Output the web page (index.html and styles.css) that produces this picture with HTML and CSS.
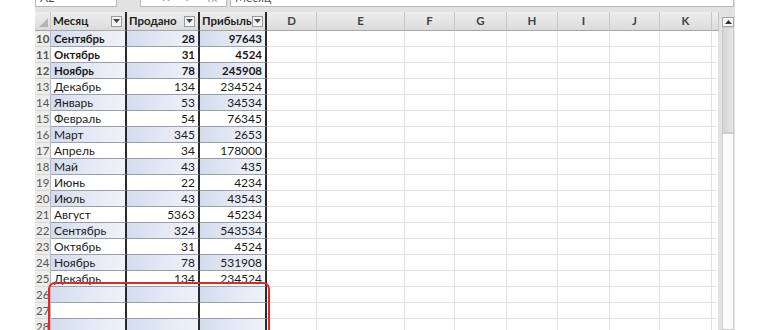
FILE: index.html
```html
<!DOCTYPE html>
<html lang="ru">
<head>
<meta charset="utf-8">
<link rel="stylesheet" href="styles.css">
</head>
<body>
<div class="screen">
  <div class="toolbar">
    <div class="box namebox"><span>A2</span></div>
    <div class="sep"></div>
    <div class="box fxbox"><span>✕ ✓ fx</span></div>
    <div class="box formula"><span>Месяц</span></div>
  </div>
  <div class="sheet">
    <div class="grid">
      <div class="row head">
        <div class="rn corner"><svg width="9" height="9" viewBox="0 0 9 9"><path d="M9 0 L9 9 L0 9 Z" fill="#b5b5b5"/></svg></div>
        <div class="c th">Месяц<span class="dd"><svg width="7" height="4" viewBox="0 0 7 4"><path d="M0 0H7L3.5 4Z" fill="#444"/></svg></span></div>
        <div class="c th">Продано<span class="dd"><svg width="7" height="4" viewBox="0 0 7 4"><path d="M0 0H7L3.5 4Z" fill="#444"/></svg></span></div>
        <div class="c th">Прибыль<span class="dd"><svg width="7" height="4" viewBox="0 0 7 4"><path d="M0 0H7L3.5 4Z" fill="#444"/></svg></span></div>
        <div class="c col">D</div><div class="c col">E</div><div class="c col">F</div><div class="c col">G</div><div class="c col">H</div><div class="c col">I</div><div class="c col">J</div><div class="c col">K</div><div class="c col"></div>
      </div>
      <div class="row band bold"><div class="rn">10</div><div class="c ta">Сентябрь</div><div class="c tb">28</div><div class="c tl">97643</div><div class="c"></div><div class="c"></div><div class="c"></div><div class="c"></div><div class="c"></div><div class="c"></div><div class="c"></div><div class="c"></div><div class="c"></div></div>
      <div class="row bold"><div class="rn">11</div><div class="c ta">Октябрь</div><div class="c tb">31</div><div class="c tl">4524</div><div class="c"></div><div class="c"></div><div class="c"></div><div class="c"></div><div class="c"></div><div class="c"></div><div class="c"></div><div class="c"></div><div class="c"></div></div>
      <div class="row band bold"><div class="rn">12</div><div class="c ta">Ноябрь</div><div class="c tb">78</div><div class="c tl">245908</div><div class="c"></div><div class="c"></div><div class="c"></div><div class="c"></div><div class="c"></div><div class="c"></div><div class="c"></div><div class="c"></div><div class="c"></div></div>
      <div class="row"><div class="rn">13</div><div class="c ta">Декабрь</div><div class="c tb">134</div><div class="c tl">234524</div><div class="c"></div><div class="c"></div><div class="c"></div><div class="c"></div><div class="c"></div><div class="c"></div><div class="c"></div><div class="c"></div><div class="c"></div></div>
      <div class="row band"><div class="rn">14</div><div class="c ta">Январь</div><div class="c tb">53</div><div class="c tl">34534</div><div class="c"></div><div class="c"></div><div class="c"></div><div class="c"></div><div class="c"></div><div class="c"></div><div class="c"></div><div class="c"></div><div class="c"></div></div>
      <div class="row"><div class="rn">15</div><div class="c ta">Февраль</div><div class="c tb">54</div><div class="c tl">76345</div><div class="c"></div><div class="c"></div><div class="c"></div><div class="c"></div><div class="c"></div><div class="c"></div><div class="c"></div><div class="c"></div><div class="c"></div></div>
      <div class="row band"><div class="rn">16</div><div class="c ta">Март</div><div class="c tb">345</div><div class="c tl">2653</div><div class="c"></div><div class="c"></div><div class="c"></div><div class="c"></div><div class="c"></div><div class="c"></div><div class="c"></div><div class="c"></div><div class="c"></div></div>
      <div class="row"><div class="rn">17</div><div class="c ta">Апрель</div><div class="c tb">34</div><div class="c tl">178000</div><div class="c"></div><div class="c"></div><div class="c"></div><div class="c"></div><div class="c"></div><div class="c"></div><div class="c"></div><div class="c"></div><div class="c"></div></div>
      <div class="row band"><div class="rn">18</div><div class="c ta">Май</div><div class="c tb">43</div><div class="c tl">435</div><div class="c"></div><div class="c"></div><div class="c"></div><div class="c"></div><div class="c"></div><div class="c"></div><div class="c"></div><div class="c"></div><div class="c"></div></div>
      <div class="row"><div class="rn">19</div><div class="c ta">Июнь</div><div class="c tb">22</div><div class="c tl">4234</div><div class="c"></div><div class="c"></div><div class="c"></div><div class="c"></div><div class="c"></div><div class="c"></div><div class="c"></div><div class="c"></div><div class="c"></div></div>
      <div class="row band"><div class="rn">20</div><div class="c ta">Июль</div><div class="c tb">43</div><div class="c tl">43543</div><div class="c"></div><div class="c"></div><div class="c"></div><div class="c"></div><div class="c"></div><div class="c"></div><div class="c"></div><div class="c"></div><div class="c"></div></div>
      <div class="row"><div class="rn">21</div><div class="c ta">Август</div><div class="c tb">5363</div><div class="c tl">45234</div><div class="c"></div><div class="c"></div><div class="c"></div><div class="c"></div><div class="c"></div><div class="c"></div><div class="c"></div><div class="c"></div><div class="c"></div></div>
      <div class="row band"><div class="rn">22</div><div class="c ta">Сентябрь</div><div class="c tb">324</div><div class="c tl">543534</div><div class="c"></div><div class="c"></div><div class="c"></div><div class="c"></div><div class="c"></div><div class="c"></div><div class="c"></div><div class="c"></div><div class="c"></div></div>
      <div class="row"><div class="rn">23</div><div class="c ta">Октябрь</div><div class="c tb">31</div><div class="c tl">4524</div><div class="c"></div><div class="c"></div><div class="c"></div><div class="c"></div><div class="c"></div><div class="c"></div><div class="c"></div><div class="c"></div><div class="c"></div></div>
      <div class="row band"><div class="rn">24</div><div class="c ta">Ноябрь</div><div class="c tb">78</div><div class="c tl">531908</div><div class="c"></div><div class="c"></div><div class="c"></div><div class="c"></div><div class="c"></div><div class="c"></div><div class="c"></div><div class="c"></div><div class="c"></div></div>
      <div class="row"><div class="rn">25</div><div class="c ta">Декабрь</div><div class="c tb">134</div><div class="c tl">234524</div><div class="c"></div><div class="c"></div><div class="c"></div><div class="c"></div><div class="c"></div><div class="c"></div><div class="c"></div><div class="c"></div><div class="c"></div></div>
      <div class="row band"><div class="rn">26</div><div class="c ta"></div><div class="c tb"></div><div class="c tl"></div><div class="c"></div><div class="c"></div><div class="c"></div><div class="c"></div><div class="c"></div><div class="c"></div><div class="c"></div><div class="c"></div><div class="c"></div></div>
      <div class="row"><div class="rn">27</div><div class="c ta"></div><div class="c tb"></div><div class="c tl"></div><div class="c"></div><div class="c"></div><div class="c"></div><div class="c"></div><div class="c"></div><div class="c"></div><div class="c"></div><div class="c"></div><div class="c"></div></div>
      <div class="row band"><div class="rn">28</div><div class="c ta"></div><div class="c tb"></div><div class="c tl"></div><div class="c"></div><div class="c"></div><div class="c"></div><div class="c"></div><div class="c"></div><div class="c"></div><div class="c"></div><div class="c"></div><div class="c"></div></div>
    </div>
    <div class="scrollbar">
      <div class="arrow"><svg width="7" height="4" viewBox="0 0 7 4"><path d="M0 4H7L3.5 0Z" fill="#333"/></svg></div>
      <div class="thumb"></div>
      <div class="track"></div>
    </div>
  </div>
  <div class="highlight"></div>
</div>
</body>
</html>
```
FILE: styles.css
```css
* { box-sizing: border-box; }
html, body { margin: 0; padding: 0; background: #fff; }
body {
  width: 770px;
  height: 330px;
  overflow: hidden;
  font-family: Lato, "Noto Sans", sans-serif;
  font-size: 12px;
  color: #1a1a1a;
}
.screen {
  position: relative;
  margin-left: 35px;
  width: 700px;
  height: 330px;
  background: #e2e2e2;
  overflow: hidden;
}
.toolbar {
  display: flex;
  height: 12px;
  align-items: flex-start;
}
.box {
  height: 7px;
  background: #fff;
  border: 1px solid #b8b8b8;
  border-top: none;
  overflow: hidden;
  color: #555;
  font-size: 12px;
  line-height: 12px;
}
.box span { display: block; margin-top: -8px; padding-left: 4px; }
.namebox { width: 82px; }
.sep { width: 23px; }
.fxbox { width: 87px; color: #999; }
.fxbox span { padding-left: 20px; word-spacing: 10px; }
.formula { width: 504px; margin-left: 3px; }
.sheet {
  display: flex;
  height: 318px;
}
.grid {
  width: 684px;
  background: #fff;
}
.row {
  display: grid;
  grid-template-columns: 16px 76px 73px 67px 50px 88px 50px 52px 51px 52px 50px 52px 7px;
  height: 16px;
}
.c {
  border-right: 1px solid #e1e1e1;
  border-bottom: 1px solid #e1e1e1;
  line-height: 15px;
  padding: 0 3px;
  white-space: nowrap;
  overflow: hidden;
}
.rn {
  background: #ececec;
  border-right: 1px solid #b9b9b9;
  border-bottom: 1px solid #d8d8d8;
  color: #555;
  font-size: 11.5px;
  line-height: 15px;
  padding-left: 1px;
}
.bold .rn, .bold .c { font-weight: 700; font-size: 11.5px; }
.ta, .tb, .tl {
  border-bottom: 1px solid #9ba0a8;
  border-right: 2px solid #2a2a2a;
}
.tb, .tl { text-align: right; }
.band .ta, .band .tb, .band .tl {
  background: linear-gradient(90deg, #d3dcee 0%, #e4eaf5 55%, #eef2f9 100%);
}
.head {
  height: 19px;
}
.head .c, .head .rn {
  border-bottom: 1px solid #a6a6a6;
  border-right: 1px solid #c6c6c6;
  background: linear-gradient(#eeeeee, #dbdbdb);
  line-height: 18px;
}
.corner { display: flex; align-items: flex-end; justify-content: flex-end; padding: 0 2px 3px 0; }
.head .th {
  font-weight: 700;
  display: flex;
  align-items: center;
  justify-content: space-between;
  padding-left: 2px;
  padding-right: 3px;
  border-right: 2px solid #2a2a2a;
  color: #222;
  font-size: 11.5px;
}
.dd {
  flex: none;
  width: 11px;
  height: 11px;
  background: #f4f4f4;
  border: 1px solid #9a9a9a;
  display: flex;
  align-items: center;
  justify-content: center;
}
.col {
  text-align: center;
  font-weight: 700;
  color: #444;
  font-size: 11.5px;
}
.scrollbar {
  width: 16px;
  display: flex;
  flex-direction: column;
  background: #e2e2e2;
  padding: 5px 1px 0 3px;
}
.arrow {
  height: 10px;
  background: #f6f6f6;
  border: 1px solid #a8a8a8;
  display: flex;
  align-items: center;
  justify-content: center;
}
.thumb {
  height: 106px;
  background: linear-gradient(90deg, #d4d4d4, #e6e6e6);
  border: 1px solid #c9c9c9;
}
.track {
  flex: 1;
  background: #fbfbfb;
  border: 1px solid #d0d0d0;
}
.highlight {
  position: absolute;
  left: 13px;
  top: 282px;
  width: 222px;
  height: 70px;
  border: 2.5px solid #e3262a;
  border-radius: 7px;
}
```
